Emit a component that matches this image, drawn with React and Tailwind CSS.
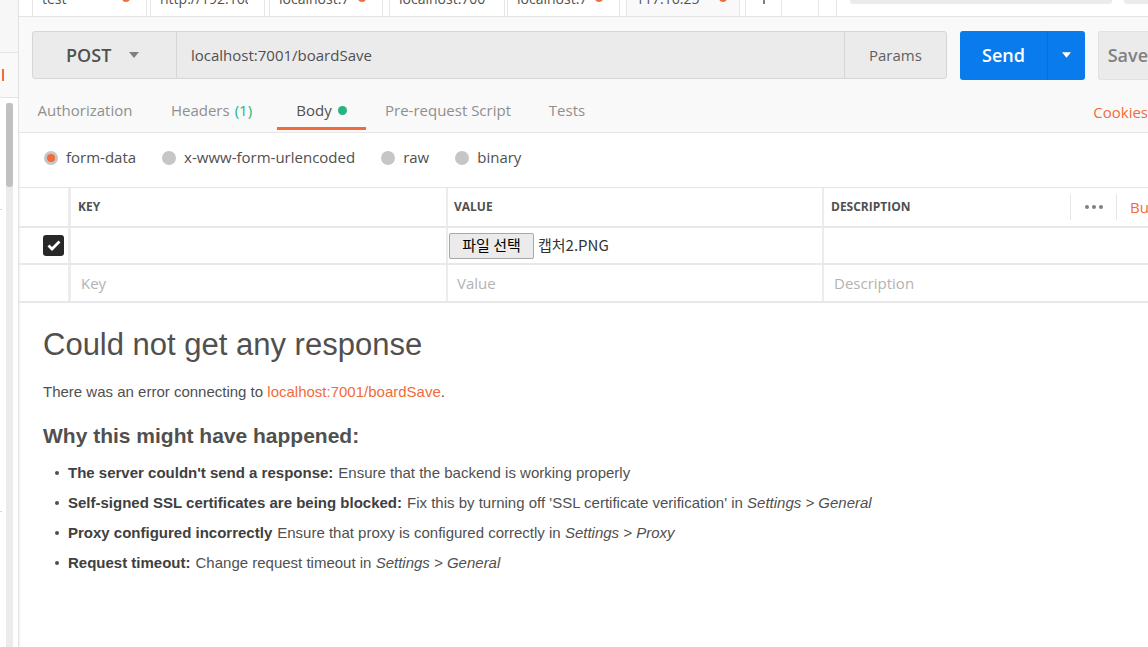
import React from 'react';

const tabs = [
  { name: 'test', dot: true, cls: 'ml-[13px] w-[115px]' },
  { name: 'http://192.168.0', dot: false, cls: 'ml-[3px] w-[115px]' },
  { name: 'localhost:7', dot: true, cls: 'ml-[4px] w-[114px]' },
  { name: 'localhost:7001/v', dot: false, cls: 'ml-[6px] w-[116px]' },
  { name: 'localhost:7', dot: true, cls: 'ml-[2px] w-[113px]' },
];

const reqTabs = [
  { name: 'Authorization', cls: 'w-[132px]' },
  { name: 'Headers', count: '(1)', cls: 'w-[121px]' },
  { name: 'Body', active: true, cls: 'ml-[5px] w-[89px]' },
  { name: 'Pre-request Script', cls: 'w-[164px]' },
  { name: 'Tests', cls: 'w-[74px]' },
];

const bodyTypes = ['form-data', 'x-www-form-urlencoded', 'raw', 'binary'];

const reasons = [
  {
    label: "The server couldn't send a response:",
    text: <>Ensure that the backend is working properly</>,
  },
  {
    label: 'Self-signed SSL certificates are being blocked:',
    text: (
      <>
        Fix this by turning off 'SSL certificate verification' in <i>Settings &gt; General</i>
      </>
    ),
  },
  {
    label: 'Proxy configured incorrectly',
    text: (
      <>
        Ensure that proxy is configured correctly in <i>Settings &gt; Proxy</i>
      </>
    ),
  },
  {
    label: 'Request timeout:',
    text: (
      <>
        Change request timeout in <i>Settings &gt; General</i>
      </>
    ),
  },
];

const Caret = ({ className }) => (
  <svg viewBox="0 0 10 6" className={className} aria-hidden="true">
    <path d="M0 0h10L5 6z" fill="currentColor" />
  </svg>
);

const Sidebar = () => (
  <div className="w-[19px] shrink-0 flex flex-col border-r border-[#e2e2e2] shadow-[1px_0_2px_rgba(0,0,0,0.06)] bg-white">
    <div className="h-[53px] bg-[#f7f7f7] border-b border-[#e6e6e6]" />
    <div className="h-[45px] bg-[#f9f9f9] border-b border-[#e6e6e6] flex items-center">
      <div className="ml-[2px] w-[2px] h-[12px] bg-[#f26b3a]" />
    </div>
    <div className="flex-1 flex pt-[5px] relative">
      <div className="ml-[6px] w-[7px] bg-[#ebebeb] flex flex-col">
        <div className="h-[84px] bg-[#c1c1c1] rounded-[3px]" />
      </div>
      <div className="absolute left-0 top-[111px] w-[2px] h-px bg-[#d8d8d8]" />
      <div className="absolute left-0 top-[413px] w-[2px] h-px bg-[#d8d8d8]" />
    </div>
  </div>
);

const TopTabs = () => (
  <div className="h-[17px] flex bg-white border-b border-[#e3e3e3] text-[14px] text-[#505050] overflow-hidden">
    {tabs.map((t, i) => (
      <div
        key={i}
        className={`${t.cls} h-[16px] border-x border-[#e6e6e6] bg-white overflow-hidden`}
      >
        <div className="-mt-[22px] h-[40px] flex items-center pl-[9px] pr-[16px]">
          <span className="flex-1 overflow-hidden whitespace-nowrap">{t.name}</span>
          {t.dot && <span className="w-[8px] h-[8px] shrink-0 rounded-full bg-[#f26b3a] ml-2" />}
        </div>
      </div>
    ))}
    <div className="ml-[6px] w-[114px] h-[17px] border-x border-[#e6e6e6] bg-[#f9f9f9] overflow-hidden">
      <div className="-mt-[22px] h-[40px] flex items-center pl-[9px] pr-[12px]">
        <span className="flex-1 overflow-hidden whitespace-nowrap">117.16.25</span>
        <span className="w-[8px] h-[8px] shrink-0 rounded-full bg-[#f26b3a] ml-2" />
      </div>
    </div>
    <div className="ml-[5px] w-[37px] h-[16px] border-x border-[#e6e6e6] bg-white flex justify-center">
      <div className="w-[2px] h-[4px] bg-[#808080]" />
    </div>
    <div className="w-[37px] h-[16px] border-r border-[#e6e6e6] bg-white" />
    <div className="ml-[17px] w-px h-[16px] bg-[#e6e6e6]" />
    <div className="ml-[13px] w-[262px] h-[4px] bg-[#ebebeb] rounded-b-[3px]" />
    <div className="ml-[12px] flex-1 h-[4px] bg-[#ebebeb] rounded-bl-[3px]" />
  </div>
);

const RequestBar = () => (
  <div className="flex items-center pl-[13px] pt-[14px] h-[62px]">
    <div className="flex h-[48px] w-[917px] rounded-[3px] border border-[#d6d6d6] bg-[#ebebeb] text-[#505050]">
      <div className="w-[144px] flex items-center border-r border-[#d6d6d6]">
        <span className="ml-[33px] text-[18px] font-semibold">POST</span>
        <Caret className="ml-[18px] w-[10px] h-[6px] text-[#808080]" />
      </div>
      <div className="flex-1 flex items-center pl-[14px] text-[15px]">localhost:7001/boardSave</div>
      <div className="w-[102px] flex items-center justify-center border-l border-[#d6d6d6] text-[15px] text-[#606060]">
        Params
      </div>
    </div>
    <div className="ml-[13px] flex h-[49px] w-[125px] rounded-[3px] bg-[#097bed] text-white">
      <div className="w-[87px] flex items-center justify-center text-[18px] font-semibold">Send</div>
      <div className="flex-1 flex items-center justify-center border-l border-[#0a6ed6]">
        <Caret className="w-[9px] h-[6px]" />
      </div>
    </div>
    <div className="ml-[13px] flex-1 h-[49px] rounded-l-[3px] bg-[#ebebeb] border border-r-0 border-[#e2e2e2] flex items-center pl-[9px] text-[18px] font-semibold text-[#808080]">
      Save
    </div>
  </div>
);

const RequestTabs = () => (
  <div className="flex items-stretch h-[54px] border-b border-[#e6e6e6] text-[15px]">
    {reqTabs.map(t => (
      <div
        key={t.name}
        className={`${t.cls} mb-[2px] flex items-center justify-center pt-[14px] border-b-[3px] ${
          t.active ? 'border-[#f26b3a] text-[#505050]' : 'border-transparent text-[#8f8f8f]'
        }`}
      >
        {t.name}
        {t.count && <span className="ml-[5px] text-[#26b47f]">{t.count}</span>}
        {t.active && <span className="ml-[6px] w-[9px] h-[9px] rounded-full bg-[#26b47f]" />}
      </div>
    ))}
    <div className="ml-auto flex items-center pt-[14px] pl-[4px] text-[#f26b3a] whitespace-nowrap">Cookies</div>
  </div>
);

const BodyTypes = () => (
  <div className="flex items-center h-[54px] pb-[4px] pl-[25px] text-[15px] text-[#505050]">
    {bodyTypes.map((b, i) => (
      <div key={b} className={`flex items-center ${i > 0 ? 'ml-[26px]' : ''}`}>
        <span className="w-[14px] h-[14px] rounded-full bg-[#c6c6c6] flex items-center justify-center">
          {i === 0 && <span className="w-[8px] h-[8px] rounded-full bg-[#f26b3a]" />}
        </span>
        <span className="ml-[8px] -mt-[2px]">{b}</span>
      </div>
    ))}
  </div>
);

const ParamTable = () => (
  <div className="border-t border-[#e6e6e6] text-[15px]">
    <div className="flex h-[40px] border-b-2 border-[#e8e8e8] text-[12px] font-bold text-[#505050] overflow-hidden">
      <div className="w-[52px] shrink-0 border-r-[3px] border-[#ececec]" />
      <div className="w-[377px] shrink-0 flex items-center pl-[7px] border-r-2 border-[#ececec]">KEY</div>
      <div className="w-[376px] shrink-0 flex items-center pl-[6px] border-r-2 border-[#ececec]">VALUE</div>
      <div className="flex items-center pl-[7px] shrink-0">
        <span className="w-[239px] shrink-0">DESCRIPTION</span>
        <div className="w-px h-[26px] bg-[#e6e6e6]" />
        <div className="w-[45px] flex items-center justify-center gap-[3px]">
          <span className="w-[4px] h-[4px] rounded-full bg-[#808080]" />
          <span className="w-[4px] h-[4px] rounded-full bg-[#808080]" />
          <span className="w-[4px] h-[4px] rounded-full bg-[#808080]" />
        </div>
        <div className="w-px h-[26px] bg-[#e6e6e6]" />
        <span className="ml-[13px] text-[15px] font-normal text-[#f26b3a] whitespace-nowrap">Bulk Edit</span>
      </div>
    </div>
    <div className="flex h-[37px] border-b-2 border-[#e8e8e8]">
      <div className="w-[52px] border-r-[3px] border-[#ececec] flex items-center justify-end pr-[4px]">
        <div className="w-[21px] h-[21px] rounded-[3px] bg-[#282828] flex items-center justify-center">
          <svg viewBox="0 0 14 11" className="w-[14px] h-[11px]" aria-hidden="true">
            <path d="M1.5 5.5l3.5 3.5 7.5-7.5" stroke="white" strokeWidth="2.8" fill="none" />
          </svg>
        </div>
      </div>
      <div className="w-[377px] border-r-2 border-[#ececec]" />
      <div className="w-[376px] flex items-center pl-px border-r-2 border-[#ececec] font-['Noto_Sans_CJK_KR',sans-serif] text-[#333]">
        <span className="h-[26px] w-[85px] flex items-center justify-center border border-[#a8a8a8] rounded-[2px] bg-[#ebebeb] text-[15px] text-black">
          파일 선택
        </span>
        <span className="ml-[4px] text-[15px]">캡처2.PNG</span>
      </div>
      <div className="flex-1" />
    </div>
    <div className="flex h-[38px] border-b-2 border-[#e8e8e8] text-[#b3b3b3]">
      <div className="w-[52px] border-r-[3px] border-[#ececec]" />
      <div className="w-[377px] flex items-center pl-[10px] border-r-2 border-[#ececec]">Key</div>
      <div className="w-[376px] flex items-center pl-[9px] border-r-2 border-[#ececec]">Value</div>
      <div className="flex-1 flex items-center pl-[10px]">Description</div>
    </div>
  </div>
);

const ResponseError = () => (
  <div className="pl-[24px] pt-[22px] font-['Liberation_Sans',Arial,sans-serif] text-[#505050]">
    <h1 className="text-[31px] leading-[40px]">Could not get any response</h1>
    <p className="mt-[17px] text-[15px] leading-[20px]">
      There was an error connecting to <span className="text-[#f26b3a]">localhost:7001/boardSave</span>.
    </p>
    <h2 className="mt-[20px] text-[21px] leading-[28px] font-bold">Why this might have happened:</h2>
    <ul className="mt-[8px] pl-[12px]">
      {reasons.map(r => (
        <li key={r.label} className="flex items-center h-[30px] text-[15px]">
          <span className="w-[4px] h-[4px] rounded-full bg-[#505050]" />
          <span className="ml-[9px] font-bold text-[#404040]">{r.label}</span>
          <span className="ml-[5px]">{r.text}</span>
        </li>
      ))}
    </ul>
  </div>
);

const App = () => (
  <div className="w-[1148px] h-[647px] flex overflow-hidden bg-white font-['Open_Sans',sans-serif]">
    <Sidebar />
    <div className="flex-1 min-w-0 flex flex-col">
      <TopTabs />
      <div className="bg-[#f9f9f9]">
        <RequestBar />
        <RequestTabs />
      </div>
      <BodyTypes />
      <ParamTable />
      <ResponseError />
    </div>
  </div>
);

export default App;
